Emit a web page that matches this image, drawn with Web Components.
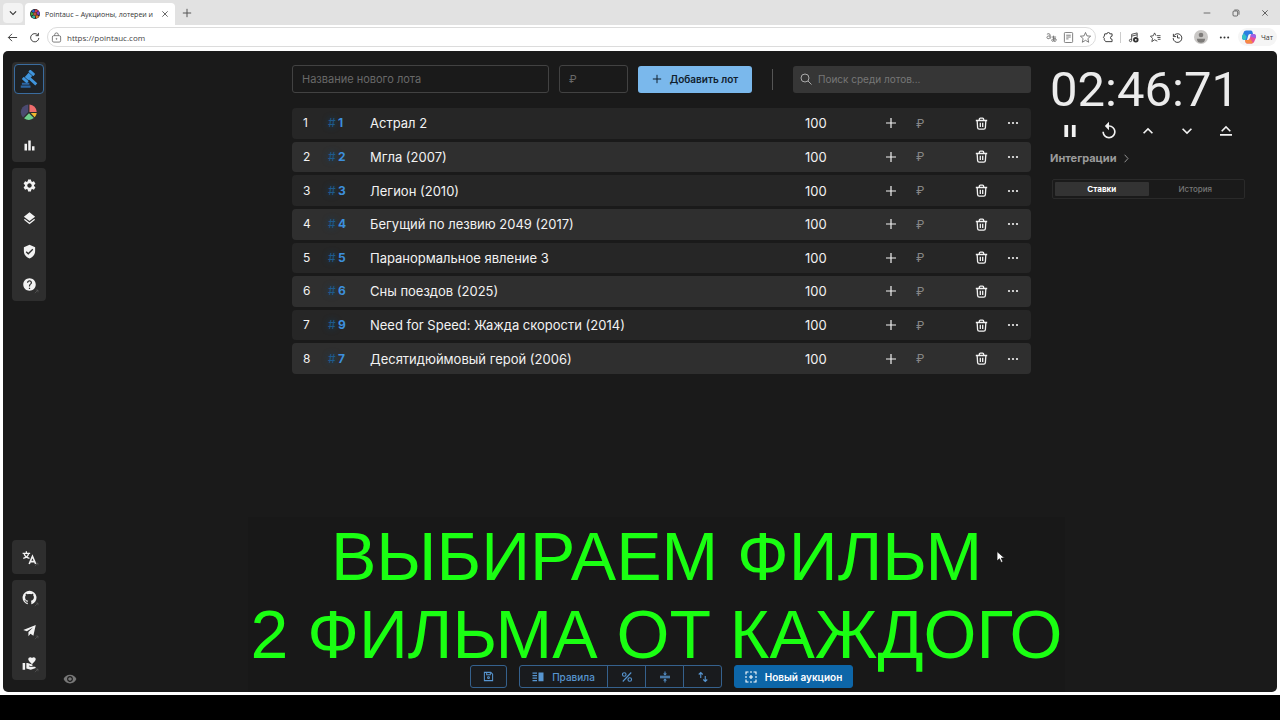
<!DOCTYPE html>
<html lang="ru">
<head>
<meta charset="utf-8">
<meta name="viewport" content="width=device-width, initial-scale=1">
<title>Pointauc – Аукционы, лотереи и розыгрыши</title>
<style>
  html, body { height: 100%; }
  body { margin: 0; background: #000; font-family: Inter, "Noto Sans", sans-serif; }
</style>
</head>
<body>
<desktop-screen>
  <browser-window>
    <auction-app></auction-app>
  </browser-window>
</desktop-screen>

<script>
const ICONS = {
  gavel: '<g fill="#3f95dd"><g transform="rotate(42 11 9)"><rect x="6.500" y="0" width="9" height="4" rx="1"/><rect x="7.800" y="4.600" width="6.400" height="7.800"/><rect x="6.500" y="13" width="9" height="4" rx="1"/></g><path d="M14 9.500l9 8.300-2.600 2.900-9-8.400z"/><path fill="#2b66a5" d="M1 20.500h13V23.500H1zm1.500-3.500h10v2.800h-10z"/></g>',
  pie: '<path fill="#4b4a70" d="M11 2v10l-7 7.4A10.4 10.4 0 0 1 11 2z"/><path fill="#ee6c6c" d="M12.6 2A10.3 10.3 0 0 1 22.3 12h-9.7z"/><path fill="#f2b92d" d="M14.3 13.4h8a10 10 0 0 1-2.7 5.5z"/><path fill="#6fd08c" d="M12 13.6l6.4 6.5a10.3 10.3 0 0 1-13 .2z"/>',
  bars: '<path d="M4 9h4v11H4zm12 4h4v7h-4zm-6-9h4v16h-4z"/>',
  settings: '<path d="M19.14 12.94c.04-.3.06-.61.06-.94 0-.32-.02-.64-.07-.94l2.03-1.58c.18-.14.23-.41.12-.61l-1.92-3.32c-.12-.22-.37-.29-.59-.22l-2.39.96c-.5-.38-1.03-.7-1.62-.94l-.36-2.54c-.04-.24-.24-.41-.48-.41h-3.84c-.24 0-.43.17-.47.41l-.36 2.54c-.59.24-1.13.57-1.62.94l-2.39-.96c-.22-.08-.47 0-.59.22L2.74 8.87c-.12.21-.08.47.12.61l2.03 1.58c-.05.3-.09.63-.09.94s.02.64.07.94l-2.03 1.58c-.18.14-.23.41-.12.61l1.92 3.32c.12.22.37.29.59.22l2.39-.96c.5.38 1.03.7 1.62.94l.36 2.54c.05.24.24.41.48.41h3.84c.24 0 .44-.17.47-.41l.36-2.54c.59-.24 1.13-.56 1.62-.94l2.39.96c.22.08.47 0 .59-.22l1.92-3.32c.12-.22.07-.47-.12-.61l-2.01-1.58zM12 15.6c-1.98 0-3.6-1.62-3.6-3.6s1.62-3.6 3.6-3.6 3.6 1.62 3.6 3.6-1.62 3.6-3.6 3.6z"/>',
  layers: '<path d="m11.99 18.54-7.37-5.73L3 14.07l9 7 9-7-1.63-1.27-7.38 5.74zM12 16l7.36-5.73L21 9l-9-7-9 7 1.63 1.27L12 16z"/>',
  shield: '<path d="M12 1 3 5v6c0 5.55 3.84 10.74 9 12 5.16-1.26 9-6.45 9-12V5l-9-4zm-2 16-4-4 1.41-1.41L10 14.17l6.59-6.59L18 9l-8 8z"/>',
  help: '<path d="M12 2C6.48 2 2 6.48 2 12s4.48 10 10 10 10-4.48 10-10S17.52 2 12 2zm1 17h-2v-2h2v2zm2.07-7.75-.9.92C13.45 12.9 13 13.5 13 15h-2v-.5c0-1.1.45-2.1 1.17-2.83l1.24-1.26c.37-.36.59-.86.59-1.41 0-1.1-.9-2-2-2s-2 .9-2 2H8c0-2.21 1.79-4 4-4s4 1.79 4 4c0 .88-.36 1.68-.93 2.25z"/>',
  translate: '<g fill="none" stroke="currentColor" stroke-width="2"><path d="M1 5.5h12M7 2v3.5M3.5 6c1 4 4.500 6.500 8.500 7.500M10.500 6c-1 4-4.500 6.500-8.500 7.500"/><path stroke-width="2.600" d="M11.500 22.500 16.700 10l5.200 12.500M13.500 18.500h6.500"/></g>',
  github: '<path d="M12 1.270a11 11 0 00-3.480 21.460c.55.09.73-.28.73-.55v-1.840c-3.030.64-3.670-1.460-3.670-1.460-.55-1.290-1.280-1.650-1.280-1.650-.92-.65.1-.65.1-.65 1.100 0 1.730 1.100 1.730 1.100.92 1.650 2.570 1.200 3.210.92a2 2 0 01.64-1.470c-2.470-.27-5.040-1.190-5.040-5.500 0-1.100.46-2.100 1.200-2.840a3.760 3.760 0 010-2.930s.91-.28 3.110 1.100c1.800-.49 3.700-.49 5.500 0 2.100-1.380 3.020-1.100 3.020-1.100a3.760 3.760 0 01.1 2.930c.83.74 1.200 1.740 1.200 2.940 0 4.210-2.570 5.130-5.040 5.400.45.37.82.92.82 2.020v3.030c0 .27.1.64.73.55A11 11 0 0012 1.270"/>',
  plane: '<path d="M22 3 2 11.200l5.800 2.100L17.500 7l-7.200 7.500V21l3.200-4 4.700 3.400z"/>',
  donate: '<path d="M1 11h4v11H1zm15-7.75C16.650 2.490 17.660 2 18.700 2 20.550 2 22 3.450 22 5.300c0 2.270-2.910 4.900-6 7.700-3.090-2.810-6-5.440-6-7.700C10 3.450 11.450 2 13.300 2c1.040 0 2.050.49 2.700 1.250zM20 17h-7l-2.090-.73.33-.94L13 16h2.820c.65 0 1.180-.53 1.180-1.180 0-.49-.31-.93-.77-1.110L8.970 11H7v9.020L14 22l8-3c-.01-1.100-.9-2-2-2z"/>',
  eye: '<path d="M12 4.500C7 4.500 2.730 7.610 1 12c1.730 4.390 6 7.500 11 7.500s9.270-3.110 11-7.500c-1.730-4.390-6-7.500-11-7.500zM12 17c-2.760 0-5-2.240-5-5s2.240-5 5-5 5 2.240 5 5-2.240 5-5 5zm0-8c-1.660 0-3 1.340-3 3s1.340 3 3 3 3-1.340 3-3-1.340-3-3-3z"/>',
  replay: '<path d="M12 5V1L7 6l5 5V7c3.310 0 6 2.690 6 6s-2.690 6-6 6-6-2.690-6-6H4c0 4.420 3.580 8 8 8s8-3.580 8-8-3.580-8-8-8z"/>',
  pause: '<path d="M4.500 20h5V4h-5v16zm10-16v16h5V4h-5z"/>',
  up: '<path d="m12 8-6 6 1.410 1.410L12 10.830l4.590 4.580L18 14z"/>',
  down: '<path d="M16.590 8.590 12 13.170 7.410 8.590 6 10l6 6 6-6z"/>',
  uptop: '<path d="m12 5-6.500 6.500 1.500 1.500 5-5 5 5 1.500-1.500zM4 16h16v2.200H4z"/>',
  right: '<path fill="none" stroke="currentColor" stroke-width="2.500" d="m7 2 9 10-9 10"/>',
  plus: '<path fill="none" stroke="currentColor" stroke-width="2.400" d="M12 2v20M2 12h20"/>',
  search: '<g fill="none" stroke="currentColor" stroke-width="2"><circle cx="10" cy="10" r="8"/><path d="m16 16 7 7"/></g>',
  trash: '<g fill="none" stroke="currentColor" stroke-width="2.400"><path d="M1.500 6.500h21M4 7l.8 12.500a3 3 0 0 0 3 2.700h8.400a3 3 0 0 0 3-2.700L20 7M8 6V4a2 2 0 0 1 2-2h4a2 2 0 0 1 2 2v2M9.800 10.500v8M14.200 10.500v8"/></g>',
  dots: '<circle cx="4" cy="12" r="2.200"/><circle cx="12" cy="12" r="2.200"/><circle cx="20" cy="12" r="2.200"/>',
  save: '<g fill="none" stroke="currentColor" stroke-width="2.200"><path d="M3 3h14l4 4v14H3z"/><path d="M8 3v5h8V3"/><circle cx="12" cy="14.500" r="2"/></g>',
  rules: '<path d="M1 3h9v2.500H1zm0 5h9v2.500H1zm0 5h9v2.500H1zm0 5h9v2.500H1zM13 3h10v17.500H13z"/>',
  percent: '<g fill="none" stroke="currentColor" stroke-width="2.200"><circle cx="6.500" cy="7" r="3.600"/><circle cx="17.500" cy="17" r="3.600"/><path d="M20.500 3 3.500 21"/></g>',
  compress: '<path d="M8 19h3v4h2v-4h3l-4-4-4 4zm8-14h-3V1h-2v4H8l4 4 4-4zM2 9.500h20v2H2zm0 3h20v2H2z"/>',
  swap: '<path fill="none" stroke="currentColor" stroke-width="2.200" d="M7.500 14V3M3.500 7l4-4 4 4M16.500 10v11M12.500 17l4 4 4-4"/>',
  newbox: '<g fill="none" stroke="currentColor" stroke-width="2.200"><path d="M2 7V2h5M17 2h5v5M22 17v5h-5M7 22H2v-5M10 2h4M10 22h4M2 10v4M22 10v4"/><path d="M12 8v8M8 12h8"/></g>',
  ext: '<path fill="none" stroke="currentColor" stroke-width="2.500" d="M4 20 19 5M8 5h11v11"/>',
  back: '<path fill="none" stroke="currentColor" stroke-width="2" d="M22 12H3M11 4l-8 8 8 8"/>',
  reload: '<path fill="none" stroke="currentColor" stroke-width="2" d="M20 7.500a9 9 0 1 0 1.500 5.500M20.500 2v6h-6"/>',
  lock: '<g fill="none" stroke="currentColor" stroke-width="1.800"><rect x="3" y="8" width="18" height="14" rx="3"/><path d="M8 8V6a4 4 0 0 1 8 0v2"/><circle cx="12" cy="15" r="1"/></g>',
  close: '<path fill="none" stroke="currentColor" stroke-width="2.200" d="m4 4 16 16M20 4 4 20"/>',
  minus: '<path fill="none" stroke="currentColor" stroke-width="2" d="M2 12h20"/>',
  restore: '<g fill="none" stroke="currentColor" stroke-width="2"><rect x="3" y="6" width="14" height="15" rx="3"/><path d="M7 3h10a4 4 0 0 1 4 4v10"/></g>',
  letters: '<g fill="none" stroke="currentColor" stroke-width="1.800"><path d="M2 5c3-2 7-2 7 2v8M9 9c-4-1-7 0-7 3s5 4 7 0"/><path d="M12 11h10M16.500 8v10c0 4 6 3 6-1s-10-3-10 1 6 3 8-4"/></g>',
  page: '<g fill="none" stroke="currentColor" stroke-width="1.800"><rect x="3" y="1" width="18" height="22" rx="2"/><path d="M7 7h10M7 11h10M7 15h5"/></g>',
  star: '<path fill="none" stroke="currentColor" stroke-width="1.800" stroke-linejoin="round" d="m12 1 3.200 7.500 8 .6-6 5.300 1.800 8L12 18.200l-7 4.200 1.800-8-6-5.300 8-.6z"/>',
  puzzle: '<path fill="none" stroke="currentColor" stroke-width="2" stroke-linejoin="round" d="M6 4h5a3 3 0 0 1 6 0h5v5a3 3 0 0 0 0 7v5H8l-3-4v-3a3 3 0 0 1 0-5z"/>',
  music: '<g fill="none" stroke="currentColor" stroke-width="1.800"><path d="M8 18V5l12-3v9"/><circle cx="5.500" cy="18.500" r="2.500"/><path d="M8 9l12-3"/></g><circle cx="17" cy="17" r="6"/><circle cx="17" cy="17" r="2" fill="#fff"/>',
  favs: '<path fill="none" stroke="currentColor" stroke-width="1.800" stroke-linejoin="round" d="M16 20l-6-3-6 4 1.500-7L1 9l6-.7L10 2l3 6M15 8h8M16 12h7M17 16h6"/>',
  history: '<path fill="none" stroke="currentColor" stroke-width="2" d="M3 4v6h6M3.500 9A9.500 9.500 0 1 1 2.500 13M12 7v6h5"/>',
  user: '<circle cx="12" cy="12" r="12" fill="#c9c7c5"/><circle cx="12" cy="8.500" r="4" fill="#7d7b79"/><path fill="#7d7b79" d="M5 15h14c0 5-3 7-7 7s-7-2-7-7z"/>',
  copilot: '<path fill="#2a7de1" d="M7 1h8c3 0 3 3 4 6h-5c-2 0-3 1-4 5l-1.500 5H4c-4 0-4.500-4-3.500-7l2-5C3.500 2.500 5 1 7 1z"/><path fill="#35c0c4" d="M3 5.500 8 11l-2 6H4c-4 0-4.500-4-3.500-7z"/><path fill="#e84f9a" d="M17 23H9c-3 0-3-3-4-6h5c2 0 3-1 4-5l1.500-5H20c4 0 4.500 4 3.500 7l-2 5c-1 2.500-2.500 4-4.500 4z"/><path fill="#f58a42" d="M5 17h5c2 0 3-1 3.500-3l5 7.500c-.5 1-1 1.500-2 1.500H9c-3 0-3-3-4-6z"/><path fill="#9a62e8" d="M15.500 7H20c4 0 4.500 4 3.500 7l-9-3z"/>',
  wheel: '<circle cx="12" cy="12" r="12" fill="#222"/><g fill="none" stroke-width="6"><path stroke="#d8334a" d="M12 4a8 8 0 0 1 5.600 2.400"/><path stroke="#7a3cc9" d="M18 7a8 8 0 0 1 1.800 7"/><path stroke="#e0802f" d="M19 16a8 8 0 0 1-5 3.800"/><path stroke="#2bb3a0" d="M12 20a8 8 0 0 1-6-3"/><path stroke="#3ca545" d="M5 15a8 8 0 0 1 .5-6.500"/><path stroke="#2d63d0" d="M6 7a8 8 0 0 1 5-3"/></g><circle cx="12" cy="12" r="4" fill="#b9553a"/>',
  cursor: '<path fill="#fff" stroke="#111" stroke-width="1.500" d="M4 1v19l5-4.500 3.200 7.500 3.600-1.600-3.200-7.200h6.600z"/>'
};

function define(name, html, setup) {
  const template = document.createElement('template');
  template.innerHTML = html;
  customElements.define(name, class extends HTMLElement {
    constructor() {
      super();
      this.attachShadow({ mode: 'open' }).append(template.content.cloneNode(true));
    }
    connectedCallback() { if (setup) setup(this, this.shadowRoot); }
  });
}

define('ui-icon', `
<style>:host { display: block; flex: none; width: var(--icon, 14px); height: var(--icon, 14px); } svg { display: block; width: 100%; height: 100%; fill: currentColor; }</style>
<svg viewBox="0 0 24 24" aria-hidden="true"></svg>`,
(el, root) => { root.querySelector('svg').innerHTML = ICONS[el.getAttribute('name')] || ''; });

define('desktop-screen', `
<style>
  :host { display: flex; flex-direction: column; min-height: 100vh; background: #000; }
  .window { flex: 1; display: flex; flex-direction: column; }
  .taskbar { height: 25px; background: #000; }
</style>
<div class="window"><slot></slot></div>
<div class="taskbar"></div>`);

define('browser-window', `
<style>
  :host { flex: 1; display: flex; flex-direction: column; background: #fff; color: #333; font-family: "Open Sans", "Noto Sans", sans-serif; }
  button { all: unset; display: flex; align-items: center; justify-content: center; }
  .tabs { display: flex; align-items: flex-end; height: 25px; background: #e2e2e2; padding: 0 11px 0 3px; }
  .list { width: 20px; height: 20px; margin: 0 2px 2px 0; border-radius: 4px; background: #f3f3f3; --icon: 14px; }
  .tab { display: flex; align-items: center; gap: 5px; width: 139px; height: 22px; padding: 0 6px 0 5px; background: #fff; border-radius: 4px 4px 0 0; --icon: 10px; }
  .title { flex: 1; font-size: 7px; white-space: nowrap; }
  .tab button { --icon: 8px; }
  .new { width: 24px; height: 25px; --icon: 10px; color: #555; }
  .caption { display: flex; gap: 21px; margin-left: auto; height: 25px; align-items: center; --icon: 8px; }
  .bar { display: flex; align-items: center; box-sizing: border-box; height: 26px; padding: 0 3px 2px 7px; --icon: 11px; }
  .address { flex: 1; display: flex; align-items: center; gap: 6px; height: 18px; margin: 0 6px 0 7px; padding: 0 4px 0 3px; border: 1px solid #dcdcdc; border-radius: 10px; color: #666; --icon: 11px; }
  .address input { flex: 1; min-width: 0; border: 0; padding: 0; margin: 0 0 0 -1px; background: none; font: 8px "Open Sans", "Noto Sans", sans-serif; color: #444; outline: none; }
  .tools { display: flex; align-items: center; gap: 11px; --icon: 11px; }
  .gap { margin-left: 11px; }
  .sep { width: 1px; height: 11px; margin: 0 -4px; background: #ccc; }
  .user { --icon: 14px; }
  .chat { gap: 5px; height: 18px; margin-left: -3px; padding: 0 4px; background: #f5f5f5; border-radius: 9px; font-size: 7px; --icon: 14px; }
  .page { flex: 1; display: flex; padding: 0 3px 3px; }
</style>
<div class="tabs">
  <button class="list" aria-label="Вкладки"><ui-icon name="down"></ui-icon></button>
  <div class="tab"><ui-icon name="wheel"></ui-icon><span class="title">Pointauc – Аукционы, лотереи и</span><button aria-label="Закрыть"><ui-icon name="close"></ui-icon></button></div>
  <button class="new" aria-label="Новая вкладка"><ui-icon name="plus"></ui-icon></button>
  <div class="caption"><button aria-label="Свернуть"><ui-icon name="minus"></ui-icon></button><button aria-label="Окно"><ui-icon name="restore"></ui-icon></button><button aria-label="Закрыть окно"><ui-icon name="close"></ui-icon></button></div>
</div>
<div class="bar">
  <button aria-label="Назад"><ui-icon name="back"></ui-icon></button>
  <button class="gap" aria-label="Обновить"><ui-icon name="reload"></ui-icon></button>
  <div class="address"><ui-icon name="lock"></ui-icon><input aria-label="Адрес" value="https://pointauc.com"><ui-icon name="letters"></ui-icon><ui-icon name="page"></ui-icon><ui-icon name="star"></ui-icon></div>
  <div class="tools">
    <button aria-label="Расширения"><ui-icon name="puzzle"></ui-icon></button>
    <span class="sep"></span>
    <button aria-label="Музыка"><ui-icon name="music"></ui-icon></button>
    <button aria-label="Избранное"><ui-icon name="favs"></ui-icon></button>
    <button aria-label="Журнал"><ui-icon name="history"></ui-icon></button>
    <button class="user" aria-label="Профиль"><ui-icon name="user"></ui-icon></button>
    <button aria-label="Меню"><ui-icon name="dots"></ui-icon></button>
    <button class="chat"><ui-icon name="copilot"></ui-icon>Чат</button>
  </div>
</div>
<div class="page"><slot></slot></div>`);

define('nav-group', `
<style>:host { display: flex; flex-direction: column; gap: 3px; padding: 2px; background: #2e2e2e; border-radius: 4px; }</style>
<slot></slot>`);

define('nav-item', `
<style>
  :host { display: block; }
  a { position: relative; display: flex; align-items: center; justify-content: center; box-sizing: border-box; width: 30px; height: 30px; border: 1px solid transparent; border-radius: 4px; color: #f2f2f2; text-decoration: none; --icon: 15px; }
  :host([active]) a { background: #1e2226; border-color: #3a6c9f; }
  :host([large]) a { --icon: 18px; }
  .mark { display: none; position: absolute; right: 4px; bottom: 4px; --icon: 5px; color: #666; }
  :host([external]) .mark { display: block; }
</style>
<a href="#"><ui-icon class="main"></ui-icon><ui-icon class="mark" name="ext"></ui-icon></a>`,
(el, root) => {
  const icon = document.createElement('ui-icon');
  icon.setAttribute('name', el.getAttribute('icon'));
  root.querySelector('.main').replaceWith(icon);
  root.querySelector('a').setAttribute('aria-label', el.getAttribute('label'));
});

define('side-nav', `
<style>:host { display: flex; flex-direction: column; gap: 6px; padding: 11px 0 12px; } .fill { flex: 1; }</style>
<nav-group><nav-item active large icon="gavel" label="Аукцион"></nav-item><nav-item large icon="pie" label="Колесо"></nav-item><nav-item icon="bars" label="Статистика"></nav-item></nav-group>
<nav-group><nav-item icon="settings" label="Настройки"></nav-item><nav-item icon="layers" label="Оверлеи"></nav-item><nav-item icon="shield" label="Проверка"></nav-item><nav-item external icon="help" label="Помощь"></nav-item></nav-group>
<div class="fill"></div>
<nav-group><nav-item external icon="translate" label="Язык"></nav-item></nav-group>
<nav-group><nav-item external icon="github" label="GitHub"></nav-item><nav-item external icon="plane" label="Telegram"></nav-item><nav-item external icon="donate" label="Поддержать"></nav-item></nav-group>`);

define('lot-form', `
<style>
  :host { display: flex; align-items: center; gap: 10px; height: 28px; }
  input { box-sizing: border-box; height: 28px; min-width: 0; border: 1px solid #424242; border-radius: 3px; background: none; color: #ddd; padding: 0 9px; margin: 0; font: 11px Inter, sans-serif; outline: none; }
  input::placeholder { color: #696969; opacity: 1; }
  .name { flex: 257 1 257px; }
  .price { width: 69px; }
  button { display: flex; align-items: center; justify-content: center; gap: 8px; width: 114px; height: 27px; padding: 0; border: 0; border-radius: 3px; background: #7ab8ec; color: #10202e; font: 600 10px Inter, sans-serif; --icon: 10px; }
  .line { width: 1px; height: 21px; margin: 0 10px; background: #555; }
  label { flex: 238 1 238px; min-width: 0; display: flex; align-items: center; box-sizing: border-box; height: 27px; padding-left: 7px; background: #363636; border-radius: 3px; color: #aaa; --icon: 12px; }
  label input { flex: 1; border: 0; padding: 0 6px; font-size: 10px; }
  label input::placeholder { color: #767676; }
</style>
<input class="name" aria-label="Название" placeholder="Название нового лота">
<input class="price" aria-label="Цена" placeholder="₽">
<button><ui-icon name="plus"></ui-icon>Добавить лот</button>
<span class="line"></span>
<label><ui-icon name="search"></ui-icon><input aria-label="Поиск" placeholder="Поиск среди лотов..."></label>`);

define('lot-table', `
<style>
  :host { display: block; }
  table { width: 100%; height: 272px; border-collapse: separate; border-spacing: 0 3px; table-layout: fixed; color: #f2f2f2; font: 13px Inter, sans-serif; }
  td { padding: 0; background: #262626; white-space: nowrap; line-height: 16px; }
  tr:nth-child(even) td { background: #2f2f2f; }
  td:first-child { padding-left: 11px; border-radius: 4px 0 0 4px; font-size: 12px; }
  td:last-child { border-radius: 0 4px 4px 0; }
  .no { width: 36px; } .id { width: 42px; } .sum { width: 80px; } .plus { width: 31px; } .add { width: 59px; } .del { width: 32px; } .more { width: 24px; }
  td.id { color: #3d8fdc; font-size: 12px; font-weight: 700; }
  .id i { display: inline-block; width: 10px; font-style: normal; font-weight: 400; color: #1f5a8c; text-shadow: 0 0 6px #12476e; }
  button { all: unset; display: flex; --icon: 12px; }
  .del button { --icon: 13px; }
  input { display: block; width: 40px; padding: 0; border: 0; margin: 0; background: none; color: #ddd; font: 12px Inter, sans-serif; outline: none; }
  input::placeholder { color: #868686; opacity: 1; }
</style>
<table aria-label="Лоты"><colgroup><col class="no"><col class="id"><col><col class="sum"><col class="plus"><col class="add"><col class="del"><col class="more"></colgroup><tbody></tbody></table>`,
(el, root) => {
  const lots = [[1, 'Астрал 2'], [2, 'Мгла (2007)'], [3, 'Легион (2010)'], [4, 'Бегущий по лезвию 2049 (2017)'], [5, 'Паранормальное явление 3'], [6, 'Сны поездов (2025)'], [9, 'Need for Speed: Жажда скорости (2014)'], [7, 'Десятидюймовый герой (2006)']];
  root.querySelector('tbody').innerHTML = lots.map(([id, name], i) => `<tr><td>${i + 1}</td><td class="id"><i>#</i>${id}</td><td>${name}</td><td>100</td><td class="plus"><button aria-label="Прибавить"><ui-icon name="plus"></ui-icon></button></td><td><input aria-label="Сумма" placeholder="₽"></td><td class="del"><button aria-label="Удалить"><ui-icon name="trash"></ui-icon></button></td><td><button aria-label="Ещё"><ui-icon name="dots"></ui-icon></button></td></tr>`).join('');
});

define('auction-actions', `
<style>
  :host { display: flex; justify-content: center; gap: 12px; }
  button { display: flex; align-items: center; justify-content: center; gap: 8px; box-sizing: border-box; height: 23px; min-width: 37px; margin: 0; padding: 0; border: 1px solid #35618d; border-radius: 3px; background: #191b1e; color: #5795d0; font: 500 10px Inter, sans-serif; --icon: 12px; }
  .save { --icon: 11px; }
  .group { display: flex; }
  .group button { width: 39px; margin-left: -1px; border-radius: 0; }
  .group button:first-child { width: 89px; margin-left: 0; border-radius: 3px 0 0 3px; }
  .group button:last-child { border-radius: 0 3px 3px 0; }
  .new { width: 119px; border-color: #0d66a8; background: #0d66a8; color: #fff; font-weight: 600; }
</style>
<button class="save" aria-label="Сохранить"><ui-icon name="save"></ui-icon></button>
<div class="group"><button><ui-icon name="rules"></ui-icon>Правила</button><button aria-label="Проценты"><ui-icon name="percent"></ui-icon></button><button aria-label="Сжать"><ui-icon name="compress"></ui-icon></button><button aria-label="Порядок"><ui-icon name="swap"></ui-icon></button></div>
<button class="new"><ui-icon name="newbox"></ui-icon>Новый аукцион</button>`);

define('timer-panel', `
<style>
  :host { display: block; padding-top: 12px; }
  button { all: unset; display: flex; align-items: center; justify-content: center; }
  .time { height: 54px; font: 400 49px/54px Roboto, sans-serif; color: #ececec; white-space: nowrap; }
  .controls { display: grid; grid-template-columns: repeat(5, 1fr); height: 28px; align-items: center; color: #f2f2f2; --icon: 20px; }
  .controls .s { --icon: 18px; }
  .more { justify-content: flex-start; gap: 5px; height: 26px; font: 700 11px Inter, sans-serif; color: #9b9b9b; --icon: 9px; }
  .tabs { display: flex; height: 14px; margin: 8px 0 0 2px; padding: 2px; border: 1px solid #2a2a2a; border-radius: 2px; font: 500 8px Inter, sans-serif; color: #777; }
  .tabs button { flex: 1; border-radius: 1px; }
  .tabs .on { background: #333; color: #fff; font-weight: 700; }
</style>
<div class="time">02:46:71</div>
<div class="controls"><button class="s" aria-label="Пауза"><ui-icon name="pause"></ui-icon></button><button aria-label="Сброс"><ui-icon name="replay"></ui-icon></button><button aria-label="Больше"><ui-icon name="up"></ui-icon></button><button aria-label="Меньше"><ui-icon name="down"></ui-icon></button><button class="s" aria-label="Максимум"><ui-icon name="uptop"></ui-icon></button></div>
<button class="more">Интеграции<ui-icon name="right"></ui-icon></button>
<div class="tabs"><button class="on">Ставки</button><button>История</button></div>`);

define('stream-caption', `
<style>
  :host { position: absolute; left: 245px; right: 212px; top: 466px; bottom: 0; background: #181818; color: #1aff12; font: 68px/78px "Liberation Sans", Arial, sans-serif; white-space: nowrap; }
  div { display: flex; justify-content: center; }
</style>
<div>ВЫБИРАЕМ ФИЛЬМ</div><div>2 ФИЛЬМА ОТ КАЖДОГО</div>`);

define('auction-app', `
<style>
  :host { position: relative; flex: 1; display: grid; grid-template-columns: 34px minmax(0, 246fr) minmax(0, 739fr) 214px; padding: 0 32px 0 9px; background: #1a1a1a; border-radius: 5px; }
  .left { display: flex; align-items: flex-end; padding: 0 0 6px 17px; color: #777; --icon: 14px; }
  main { display: flex; flex-direction: column; padding: 14px 0 4px; }
  lot-table { margin-top: 12px; }
  auction-actions { margin-top: auto; position: relative; }
  timer-panel { margin-left: 19px; }
  .pointer { position: absolute; left: 992px; top: 500px; --icon: 12px; }
</style>
<stream-caption></stream-caption>
<side-nav></side-nav>
<div class="left"><ui-icon name="eye"></ui-icon></div>
<main><lot-form></lot-form><lot-table></lot-table><auction-actions></auction-actions></main>
<timer-panel></timer-panel>
<ui-icon class="pointer" name="cursor"></ui-icon>`);
</script>
</body>
</html>
